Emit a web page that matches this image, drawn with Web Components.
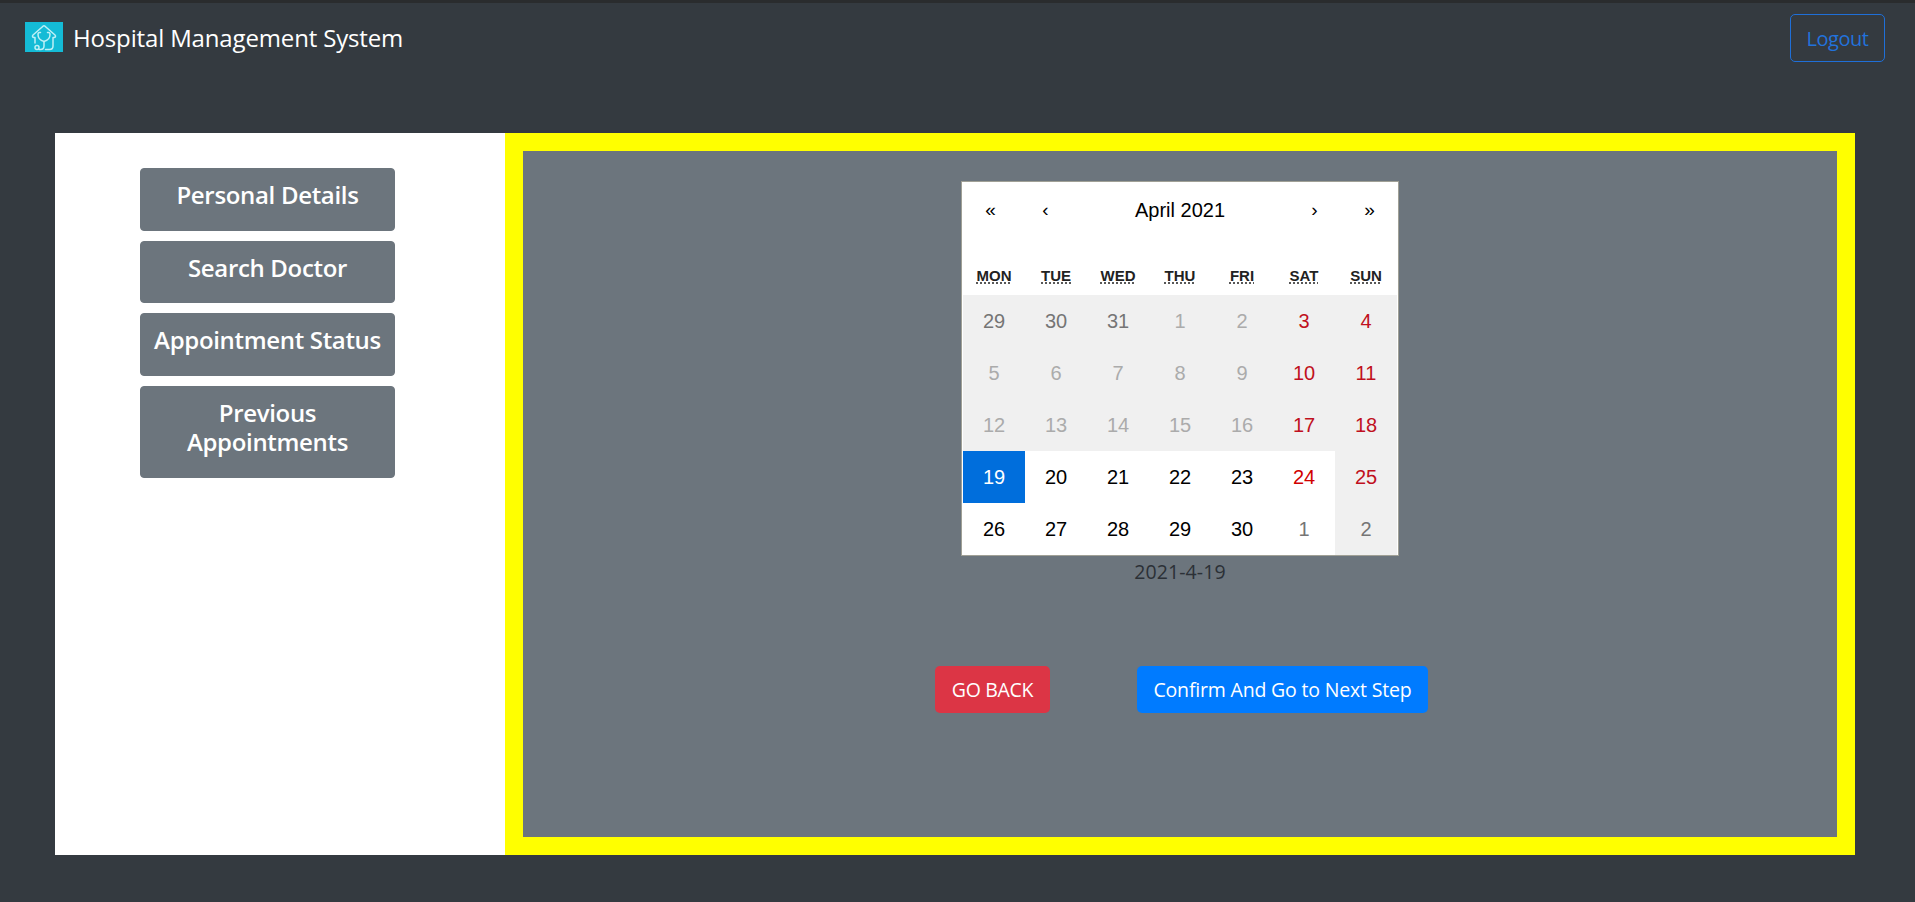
<!DOCTYPE html>
<html lang="en"><head><meta charset="utf-8"><title>Hospital Management System</title>
<style>
html,body{margin:0;height:100%;background:#343a40;overflow:hidden}
body{font-family:"Open Sans","Noto Sans",sans-serif;color:#212529}
</style></head><body>
<hm-app>
  <hm-navbar slot="nav" title-text="Hospital Management System"></hm-navbar>
  <hm-side-button slot="side">Personal Details</hm-side-button>
  <hm-side-button slot="side">Search Doctor</hm-side-button>
  <hm-side-button slot="side">Appointment Status</hm-side-button>
  <hm-side-button slot="side">Previous Appointments</hm-side-button>
  <hm-calendar></hm-calendar>
  <hm-date>2021-4-19</hm-date>
  <hm-actions>
    <hm-button kind="danger">GO BACK</hm-button>
    <hm-button kind="primary">Confirm And Go to Next Step</hm-button>
  </hm-actions>
</hm-app>
<script>
function def(name, css, html){
  customElements.define(name, class extends HTMLElement{
    constructor(){super();const r=this.attachShadow({mode:'open'});r.innerHTML='<style>'+css+'</style>'+(typeof html==='function'?html(this):html);}
  });
}
def('hm-app',`
  :host{display:flex;flex-direction:column;height:902px;box-sizing:border-box;border-top:3px solid #2a2c2e}
  .main{display:flex;height:722px;margin:0 60px 0 55px}
  .side{width:450px;background:#fff;display:flex;flex-direction:column;align-items:flex-start;gap:10px;padding:35px 0 0 85px;box-sizing:border-box;flex:none}
  .outer{flex:1;border:18px solid #ff0;background:#6c757d;padding-top:30px;display:flex;flex-direction:column;align-items:center}
`,`<slot name="nav"></slot><div class="main"><div class="side"><slot name="side"></slot></div><div class="outer"><slot></slot></div></div>`);
def('hm-navbar',`
  :host{display:flex;justify-content:space-between;height:130px;box-sizing:border-box;padding:11px 30px 0 25px;align-items:flex-start}
  .brand{display:flex;align-items:center;gap:10px;color:#fff;font-size:24px;line-height:36px;margin-top:6px;letter-spacing:-.15px}
  svg{display:block;width:38px;height:30px;flex:none;margin-top:-2px}
  button{font:inherit;font-size:20px;line-height:30px;padding:9px 0 7px;background:transparent;color:#2272dc;border:1px solid #1f6fd8;border-radius:5px;letter-spacing:-.5px;width:95px;height:48px;white-space:nowrap;box-sizing:border-box;text-align:center}
`,h=>`<div class="brand"><svg viewBox="0 0 38 30" aria-hidden="true"><rect width="38" height="30" fill="#14bbd6"/><g fill="none" stroke="#bff0f6" stroke-width="1.5" stroke-linecap="round" stroke-linejoin="round"><path d="M10 21V15.500H9C7.500 15.500 7 14 8 13L18 4.200C18.600 3.700 19.400 3.700 20 4.200L30 13C31 14 30.500 15.500 29 15.500H28V24C28 26.200 26.800 27.500 24.500 27.500H20.500"/><path d="M15.500 10.500H14.500C13.500 10.500 13 11.300 13 12.500C13 16 15.500 18.500 19 19.500C22.500 18.500 25 16 25 12.500C25 11.300 24.500 10.500 23.500 10.500H22.500"/><path d="M19 19.500V24C19 26.500 17.500 27.500 15.500 27.500H14"/><circle cx="12" cy="25.500" r="2"/></g></svg><span>${h.getAttribute('title-text')}</span></div><button>Logout</button>`);
def('hm-side-button',`
  :host{display:block;width:255px;box-sizing:border-box;background:#6c757d;border:1px solid #6c757d;border-radius:4px;padding:11px 4px 20px;color:#fff;text-align:center;font-weight:600;font-size:24px;line-height:29.5px;letter-spacing:-.32px}
`,`<slot></slot>`);
def('hm-date',`:host{display:block;font-size:19.5px;line-height:26px;margin-top:3px;color:#2b3036;letter-spacing:.1px;text-align:center}`,`<slot></slot>`);
def('hm-actions',`:host{display:flex;gap:87px;margin-top:81px;margin-left:3px}`,`<slot></slot>`);
def('hm-button',`
  :host{display:block;box-sizing:border-box;height:47px;line-height:45px;border-radius:5px;color:#fff;font-size:19.500px;white-space:nowrap;letter-spacing:-.18px;border:1px solid transparent;text-align:center}
  :host([kind=danger]){background:#dc3545;width:115px;letter-spacing:-.3px}
  :host([kind=primary]){background:#007bff;width:291px}
`,`<slot></slot>`);
def('hm-calendar',`
  :host{display:block;box-sizing:border-box;width:438px;height:375px;background:#fff;border:1px solid #a0a096;padding:1px;font-family:"Liberation Sans",Arial,sans-serif;color:#000}
  .nav{display:grid;grid-template-columns:55px 55px 1fr 55px 55px;height:44px;align-items:center;text-align:center;margin-top:5px;font-size:20px}
  .nav span.a{font-size:19px}
  .wk{display:grid;grid-template-columns:repeat(7,62px);height:62px;align-items:end;margin-top:1px;font-weight:700;font-size:15px;text-align:center;color:#222}
  .wk abbr{display:block;padding-bottom:11px;line-height:17px}
  abbr span{text-decoration:underline dotted;text-underline-offset:2px}
  .days{display:grid;grid-template-columns:repeat(7,62px);grid-auto-rows:52px;font-size:20px}
  .d{display:flex;align-items:center;justify-content:center;background:#f0f0f0;color:#ababab}
  .o{color:#757575}.r{color:#c01020}.w{background:#fff;color:#000}.wo{background:#fff;color:#757575}.wr{background:#fff;color:#d10000}
  .s{background:#006edc;color:#fff}
`,()=>{
  const wk=['MON','TUE','WED','THU','FRI','SAT','SUN'].map(x=>`<abbr><span>${x}</span></abbr>`).join('');
  const cells=[[29,'o'],[30,'o'],[31,'o'],[1,''],[2,''],[3,'r'],[4,'r'],
    [5,''],[6,''],[7,''],[8,''],[9,''],[10,'r'],[11,'r'],
    [12,''],[13,''],[14,''],[15,''],[16,''],[17,'r'],[18,'r'],
    [19,'s'],[20,'w'],[21,'w'],[22,'w'],[23,'w'],[24,'wr'],[25,'r'],
    [26,'w'],[27,'w'],[28,'w'],[29,'w'],[30,'w'],[1,'wo'],[2,'o']];
  return `<div class="nav"><span class="a">«</span><span class="a">‹</span><span>April 2021</span><span class="a">›</span><span class="a">»</span></div>
  <div class="wk">${wk}</div><div class="days">${cells.map(c=>`<div class="d ${c[1]}">${c[0]}</div>`).join('')}</div>`;
});
</script>
</body></html>
